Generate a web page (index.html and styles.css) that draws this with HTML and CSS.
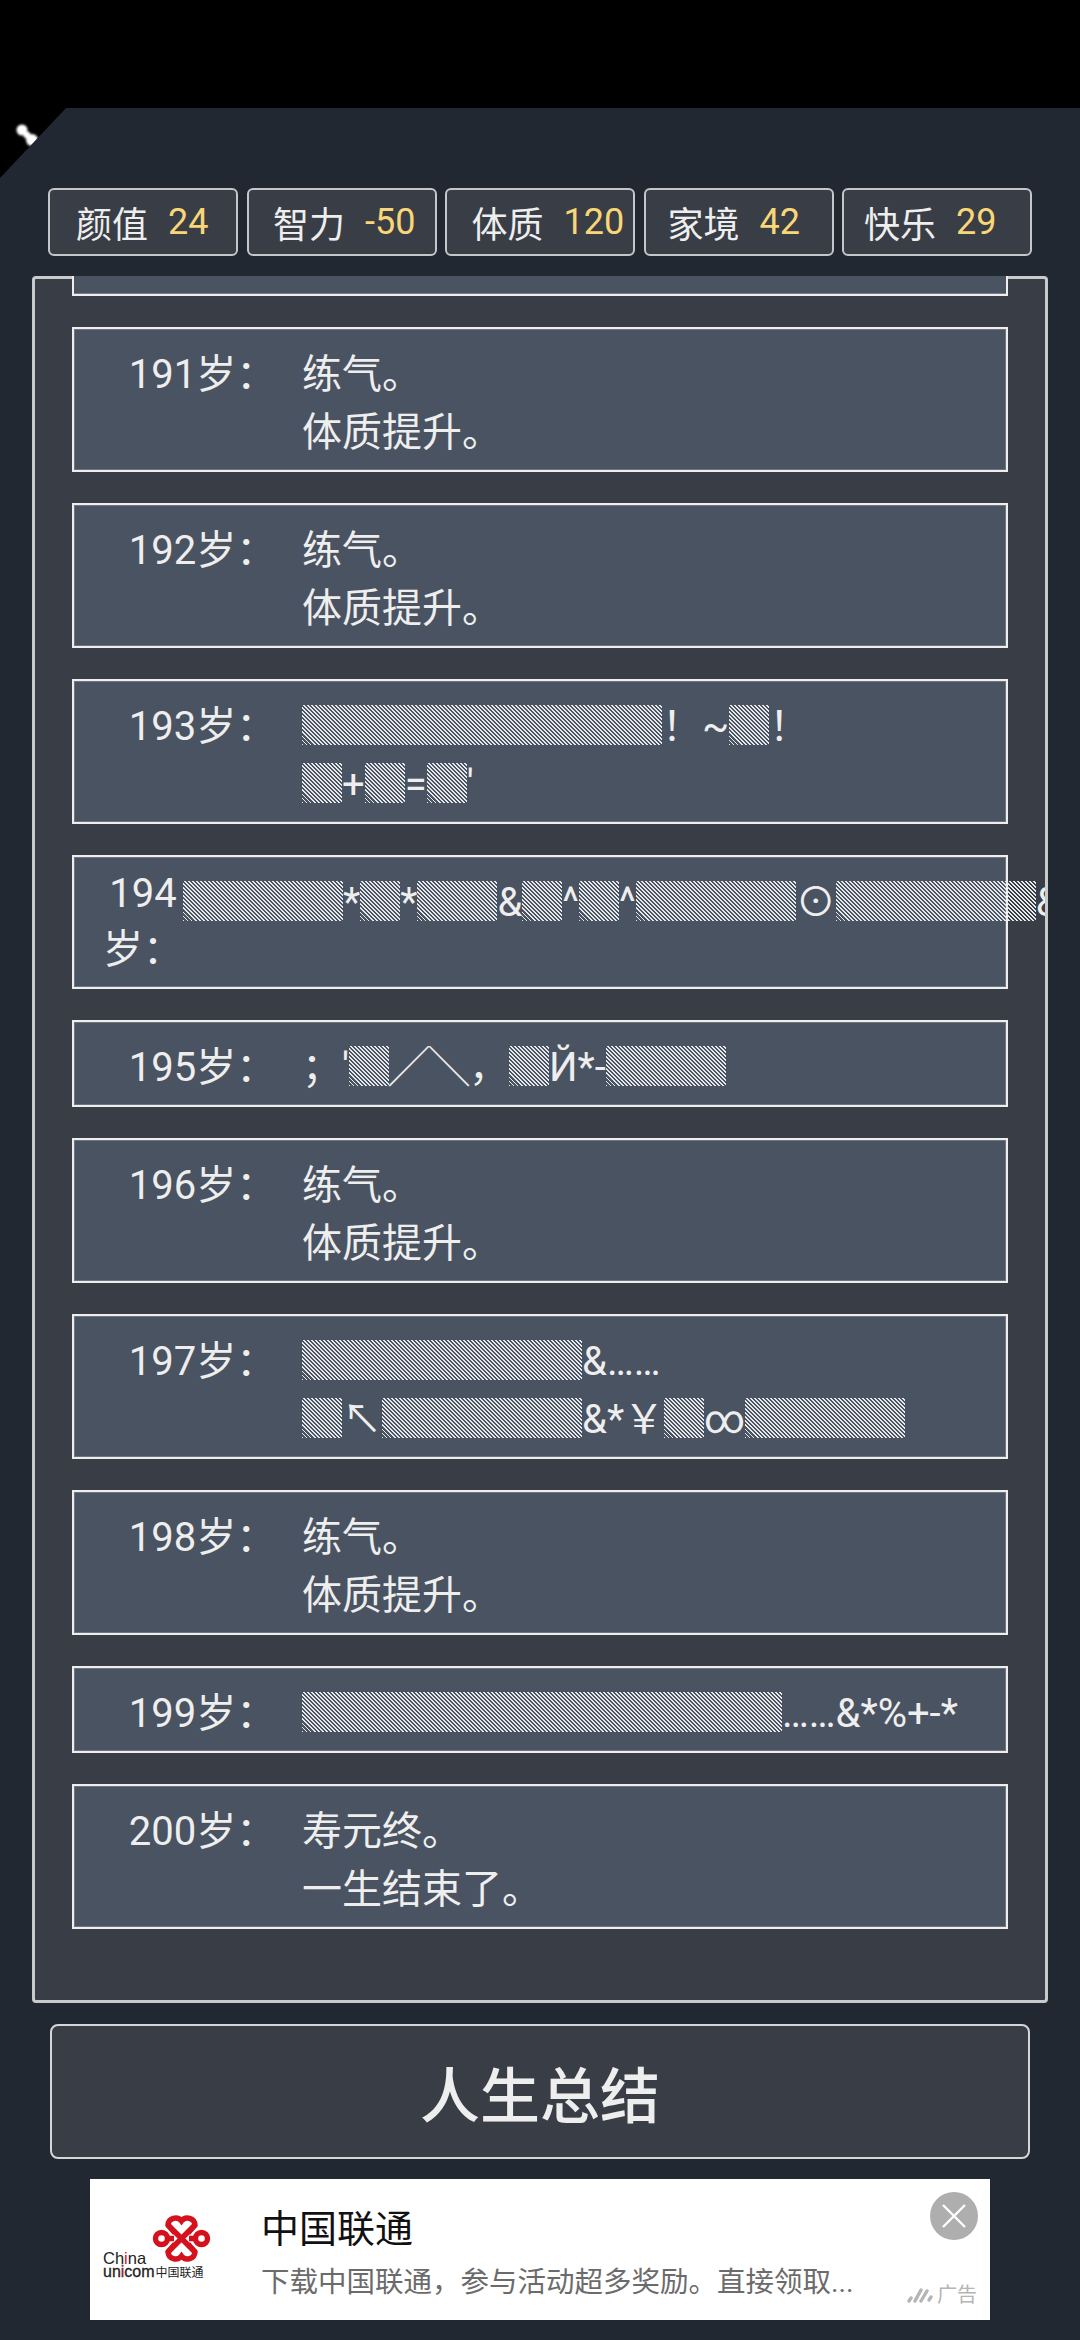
FILE: index.html
```html
<!DOCTYPE html>
<html lang="zh-CN">
<head>
<meta charset="utf-8">
<title>人生重开模拟器</title>
<link rel="stylesheet" href="styles.css">
</head>
<body>
<div class="statusbar"></div>
<div class="corner">
  <svg class="corner-icon" viewBox="0 0 66 70" width="66" height="70"><defs><filter id="soft"><feGaussianBlur stdDeviation="1.1"/></filter></defs><g fill="#fff" filter="url(#soft)"><circle cx="22" cy="22" r="5.5"/><circle cx="27" cy="27" r="3.5"/><circle cx="32" cy="32" r="6"/></g></svg>
</div>
<section class="stats">
  <div class="stat"><span>颜值</span><b>24</b></div>
  <div class="stat"><span>智力</span><b>-50</b></div>
  <div class="stat"><span>体质</span><b>120</b></div>
  <div class="stat"><span>家境</span><b>42</b></div>
  <div class="stat"><span>快乐</span><b>29</b></div>
</section>
<main class="panel">
  <div class="list">
    <div class="card-cut"></div>
    <div class="card"><div class="age">191岁：</div><div class="txt">练气。<br>体质提升。</div></div>
    <div class="card"><div class="age">192岁：</div><div class="txt">练气。<br>体质提升。</div></div>
    <div class="card"><div class="age">193岁：</div><div class="txt"><span class="h">▒▒▒▒▒▒▒▒▒</span>！~<span class="h">▒</span>！<br><span class="h">▒</span>+<span class="h">▒</span>=<span class="h">▒</span>′</div></div>
    <div class="card"><div class="age">194岁：</div><div class="txt"><span class="h">▒▒▒▒</span>*<span class="h">▒</span>*<span class="h">▒▒</span>&amp;<span class="h">▒</span>^<span class="h">▒</span>^<span class="h">▒▒▒▒</span>⊙<span class="h">▒▒▒▒▒</span>&amp;</div></div>
    <div class="card"><div class="age">195岁：</div><div class="txt">；′<span class="h">▒</span>╱╲，<span class="h">▒</span>Й*-<span class="h">▒▒▒</span></div></div>
    <div class="card"><div class="age">196岁：</div><div class="txt">练气。<br>体质提升。</div></div>
    <div class="card"><div class="age">197岁：</div><div class="txt"><span class="h">▒▒▒▒▒▒▒</span>&amp;……<br><span class="h">▒</span>↖<span class="h">▒▒▒▒▒</span>&amp;*￥<span class="h">▒</span>∞<span class="h">▒▒▒▒</span></div></div>
    <div class="card"><div class="age">198岁：</div><div class="txt">练气。<br>体质提升。</div></div>
    <div class="card"><div class="age">199岁：</div><div class="txt"><span class="h">▒▒▒▒▒▒▒▒▒▒▒▒</span>……&amp;*%+-*</div></div>
    <div class="card"><div class="age">200岁：</div><div class="txt">寿元终。<br>一生结束了。</div></div>
  </div>
</main>
<button class="summary">人生总结</button>
<aside class="ad">
  <div class="ad-logo">
    <svg class="knot" viewBox="0 0 60 47" width="60" height="47" fill="none" stroke="#d4111c" stroke-width="5.4">
      <circle cx="9.5" cy="23.5" r="6"/><circle cx="49.5" cy="23.5" r="6"/>
      <path d="M23 18 L16 10 A7.5 7.5 0 0 1 29.5 6 A7.5 7.5 0 0 1 43 10 L36 18"/>
      <path d="M23 29 L16 37 A7.5 7.5 0 0 0 29.5 41 A7.5 7.5 0 0 0 43 37 L36 29"/>
      <path d="M16 10 L43 37 M43 10 L16 37 M15 23.5 H22 M37 23.5 H44"/>
    </svg>
    <div class="logo-en">Ch<i>i</i>na</div>
    <div class="logo-row"><span class="logo-en2">un<i>i</i>com</span><span class="logo-cn">中国联通</span></div>
  </div>
  <div class="ad-text">
    <div class="ad-title">中国联通</div>
    <div class="ad-desc">下载中国联通，参与活动超多奖励。直接领取...</div>
  </div>
  <div class="ad-close">
    <svg viewBox="0 0 48 48" width="48" height="48"><path d="M13 13 L35 35 M35 13 L13 35" stroke="#fff" stroke-width="2.4" fill="none"/></svg>
  </div>
  <div class="ad-tag">
    <svg viewBox="0 0 27 18" width="27" height="18"><path d="M2 15 L4 12 M8 15 L14 4 M14 15 L20 5 M22 14 L24 11" stroke="#b5b5b5" stroke-width="3.4" stroke-linecap="round" fill="none"/></svg>
    <span>广告</span>
  </div>
</aside>
</body>
</html>
```
FILE: styles.css
```css
* { box-sizing: border-box; }
html, body { margin: 0; padding: 0; }
body {
  width: 1080px;
  height: 2340px;
  overflow: hidden;
  position: relative;
  background: #222831;
  color: #eeeeee;
  font-family: Roboto, "Noto Sans CJK SC", sans-serif;
  font-size: 40px;
}
.statusbar { height: 108px; background: #000; }
.corner {
  position: absolute;
  left: 0;
  top: 108px;
  width: 66px;
  height: 70px;
  background: #000;
  clip-path: polygon(0 0, 100% 0, 0 100%);
}
.corner-icon { display: block; }

.stats {
  display: flex;
  gap: 8.5px;
  margin: 80px 48px 0;
}
.stat {
  flex: none;
  width: 190px;
  height: 68px;
  display: flex;
  align-items: center;
  justify-content: flex-start;
  gap: 20px;
  padding-left: 26px;
  background: #393e46;
  border: 2px solid #c4c6ca;
  border-radius: 6px;
  font-size: 36px;
}
.stat:nth-child(2), .stat:nth-child(3) { padding-left: 24.5px; }
.stat:nth-child(4) { padding-left: 22px; }
.stat:nth-child(5) { padding-left: 20px; }
.stat b { font-weight: 400; color: #f9d677; }

.panel {
  margin: 20px 32px 0;
  height: 1727px;
  background: #393e46;
  border: 3px solid #c8cacc;
  border-radius: 4px;
}
.list {
  margin-top: -3px;
  height: 1727px;
  padding: 0 37px;
  overflow: hidden;
  display: flex;
  flex-direction: column;
  gap: 31px;
}
.card-cut {
  flex: none;
  height: 20px;
  background: #4a5361;
  border: 2px solid #eeeeee;
  border-top: 0;
  box-shadow: inset 0 -1px 0 rgba(255, 255, 255, 0.25);
}
.card {
  flex: none;
  display: flex;
  background: #4a5361;
  border: 2px solid #eeeeee;
  box-shadow: inset 0 0 0 1px rgba(255, 255, 255, 0.2);
  padding: 12.5px 29px;
}
.age {
  flex: 0 1 199px;
  text-align: center;
}
.txt {
  flex: none;
  white-space: nowrap;
}
.h {
  color: transparent;
  background: repeating-linear-gradient(45deg, #e6e8ea 0 1.41px, transparent 1.41px 2.83px) 0 2px / 100% 40px no-repeat;
}

.summary {
  display: block;
  width: 980px;
  height: 135px;
  margin: 21px 50px 0;
  padding: 0;
  background: #393e46;
  color: #eeeeee;
  border: 2px solid #d5d6d8;
  border-radius: 8px;
  font-family: inherit;
  font-size: 60px;
  font-weight: 500;
}

.ad {
  position: relative;
  display: flex;
  width: 900px;
  height: 141px;
  margin: 20px 90px 0;
  background: #fff;
}
.ad-logo {
  position: relative;
  flex: none;
  width: 171px;
  padding: 36px 0 0 13px;
  color: #222;
  font-family: "Liberation Sans", sans-serif;
}
.knot { position: absolute; left: 62px; top: 36px; }
.logo-en { font-size: 16.5px; line-height: 14px; margin-top: 36px; }
.logo-row { display: flex; align-items: center; line-height: 12px; margin-top: 1px; }
.logo-en2 { font-size: 16px; -webkit-text-stroke: 0.3px #222; }
.logo-cn { font-family: "Noto Sans CJK SC", sans-serif; font-size: 12px; margin-left: 1px; }
.logo-en i, .logo-en2 i { font-style: normal; color: #d4111c; }
.ad-text { flex: 1; min-width: 0; padding-top: 24px; }
.ad-title { color: #111; font-size: 38px; line-height: 52px; }
.ad-desc { color: #6b6b6b; font-size: 28.5px; line-height: 42px; margin-top: 7px; white-space: nowrap; }
.ad-close {
  position: absolute;
  right: 12px;
  top: 13px;
  width: 48px;
  height: 48px;
  border-radius: 50%;
  background: #aeaeae;
}
.ad-close svg { display: block; }
.ad-tag {
  position: absolute;
  right: 13px;
  bottom: 11px;
  display: flex;
  align-items: center;
  gap: 3px;
  color: #b5b5b5;
  font-size: 20px;
  line-height: 28px;
}
```
